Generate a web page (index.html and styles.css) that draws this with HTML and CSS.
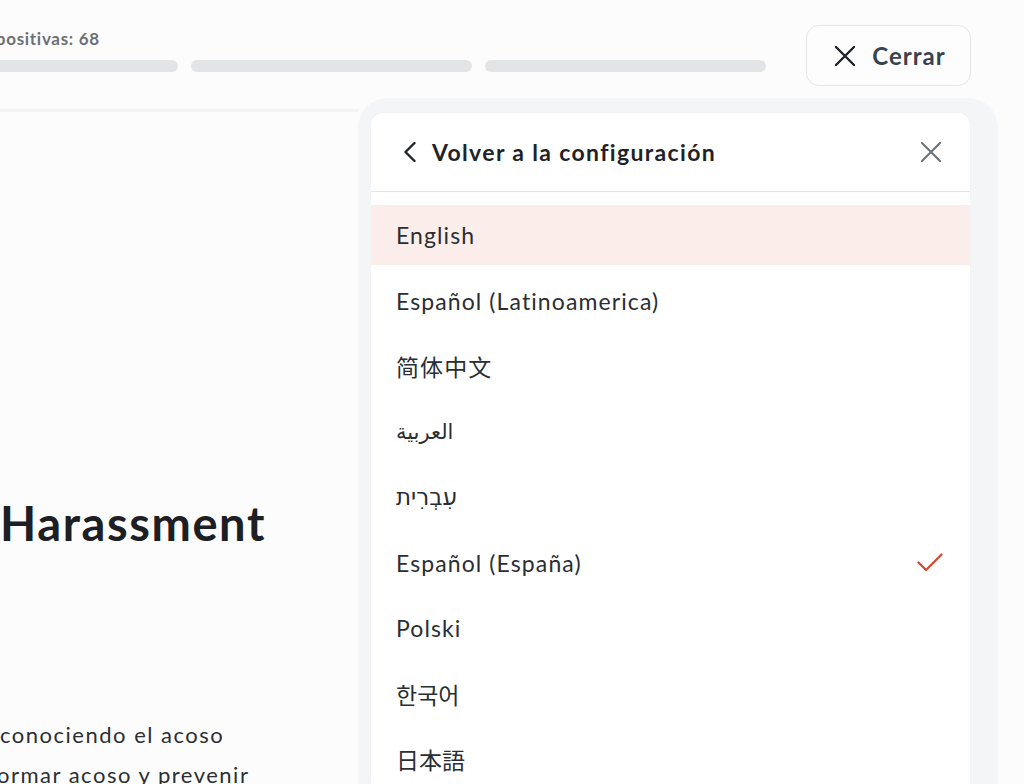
FILE: index.html
```html
<!DOCTYPE html>
<html lang="es">
<head>
<meta charset="utf-8">
<title>Idioma</title>
<link rel="stylesheet" href="styles.css">
</head>
<body>
<div class="page">
  <header class="topbar">
    <div class="progress">
      <div class="progress-label">Diapositivas: 68</div>
      <div class="bars">
        <span class="bar"></span>
        <span class="bar"></span>
        <span class="bar"></span>
      </div>
    </div>
    <button class="close-btn" type="button">
      <svg class="close-icon" width="20" height="20" viewBox="0 0 20 20" aria-hidden="true"><path d="M1 1 L19 19 M19 1 L1 19" fill="none" stroke="#1f2328" stroke-width="2.4" stroke-linecap="round"/></svg>
      <span>Cerrar</span>
    </button>
  </header>
  <main class="main">
    <section class="content-card">
      <h1 class="title">Harassment</h1>
      <p class="intro"><span class="line1">conociendo el acoso</span><br><span class="line2">ormar acoso y prevenir</span></p>
    </section>
    <aside class="panel-wrap">
      <div class="panel">
        <div class="panel-head">
          <svg class="chev" width="12" height="20" viewBox="0 0 12 20" aria-hidden="true"><path d="M10.5 1 L1.5 10 L10.5 19" fill="none" stroke="#1f2328" stroke-width="2.4" stroke-linecap="round" stroke-linejoin="round"/></svg>
          <span class="head-title">Volver a la configuración</span>
          <svg class="head-x" width="20" height="20" viewBox="0 0 20 20" aria-hidden="true"><path d="M1 1 L19 19 M19 1 L1 19" fill="none" stroke="#6b7075" stroke-width="2" stroke-linecap="round"/></svg>
        </div>
        <ul class="lang-list">
          <li class="lang active">English</li>
          <li class="lang">Español (Latinoamerica)</li>
          <li class="lang">简体中文</li>
          <li class="lang" lang="ar">العربية</li>
          <li class="lang" lang="he">עִבְרִית</li>
          <li class="lang selected"><span>Español (España)</span>
            <svg class="check" width="26" height="19" viewBox="0 0 26 19" aria-hidden="true"><path d="M1.5 9.5 L9 17 L24.5 1.5" fill="none" stroke="#d4472b" stroke-width="2.2" stroke-linecap="round" stroke-linejoin="round"/></svg>
          </li>
          <li class="lang">Polski</li>
          <li class="lang" lang="ko">한국어</li>
          <li class="lang" lang="ja">日本語</li>
        </ul>
      </div>
    </aside>
  </main>
</div>
</body>
</html>
```
FILE: styles.css
```css
* { box-sizing: border-box; }
html, body {
  margin: 0;
  padding: 0;
  background: #fcfcfc;
}
body {
  width: 1024px;
  height: 784px;
  overflow: hidden;
  font-family: Lato, "Noto Sans", "Noto Sans CJK SC", "DejaVu Sans", sans-serif;
  color: #1f2328;
}
.page {
  width: 1024px;
  height: 784px;
  display: flex;
  flex-direction: column;
}
.topbar {
  display: flex;
  align-items: flex-start;
  padding-top: 25px;
  height: 98px;
  flex: none;
}
.progress {
  margin-left: -103px;
  width: 869px;
  display: flex;
  flex-direction: column;
}
.progress-label {
  margin-top: 3px;
  margin-left: 71px;
  font-size: 17px;
  line-height: 21px;
  font-weight: 700;
  color: #6b7077;
  letter-spacing: 0.7px;
}
.bars {
  display: flex;
  gap: 13px;
  margin-top: 11px;
}
.bar {
  width: 281px;
  height: 12px;
  border-radius: 6px;
  background: #e3e4e6;
}
.close-btn {
  margin-left: 40px;
  width: 165px;
  height: 61px;
  border: 1.5px solid #e4e5e7;
  border-radius: 13px;
  background: #fdfdfd;
  display: flex;
  align-items: center;
  justify-content: center;
  gap: 17px;
  padding: 0 0 0 4px;
  font-family: inherit;
  font-size: 24px;
  font-weight: 700;
  color: #3a434c;
  letter-spacing: 1px;
}
.close-icon { flex: none; }
.main {
  flex: 1;
  display: flex;
  align-items: stretch;
  min-height: 0;
}
.content-card {
  width: 358px;
  flex: none;
  margin-top: 11px;
  border-top: 3px solid #f2f3f4;
  padding-top: 383px;
}
.title {
  margin: 0;
  font-size: 47px;
  line-height: 56px;
  font-weight: 700;
  color: #1c2024;
  letter-spacing: 1.6px;
}
.intro {
  margin: 164px 0 0 0;
  font-size: 22px;
  line-height: 40px;
  color: #2b2f33;
  letter-spacing: 1.5px;
  white-space: nowrap;
}
.line2 { margin-left: -3px; }
.panel-wrap {
  width: 640px;
  flex: none;
  background: #f4f5f6;
  border-radius: 30px 30px 0 0;
  padding: 15px 28px 0 13px;
  display: flex;
}
.panel {
  flex: 1;
  background: #ffffff;
  border-radius: 12px 12px 0 0;
  box-shadow: 0 0 2px rgba(0,0,0,0.04);
  display: flex;
  flex-direction: column;
}
.panel-head {
  height: 79px;
  flex: none;
  display: flex;
  align-items: center;
  padding: 0 29px 0 33px;
  border-bottom: 1.5px solid #e6e6e8;
}
.chev { flex: none; }
.head-title {
  margin-left: 16px;
  flex: 1;
  font-size: 23px;
  font-weight: 700;
  color: #1f2328;
  letter-spacing: 1.35px;
}
.head-x { flex: none; }
.lang-list {
  list-style: none;
  margin: 0;
  padding: 13px 0 0 0;
  display: flex;
  flex-direction: column;
  gap: 5.5px;
}
.lang {
  height: 60px;
  display: flex;
  align-items: center;
  justify-content: space-between;
  padding: 0 27px 0 25px;
  font-size: 23px;
  color: #2a2e33;
  letter-spacing: 1.1px;
}
.lang[lang="ar"] { font-family: "DejaVu Sans", sans-serif; font-size: 21px; letter-spacing: 0; }
.lang[lang="he"] { font-family: "DejaVu Sans", sans-serif; font-size: 23px; letter-spacing: 0; }
.lang[lang="ko"] { font-family: "Noto Sans CJK KR", sans-serif; letter-spacing: 0; }
.lang[lang="ja"] { font-family: "Noto Sans CJK JP", sans-serif; letter-spacing: 0; }
.active { background: #fbeeea; }
.check { flex: none; }
```
